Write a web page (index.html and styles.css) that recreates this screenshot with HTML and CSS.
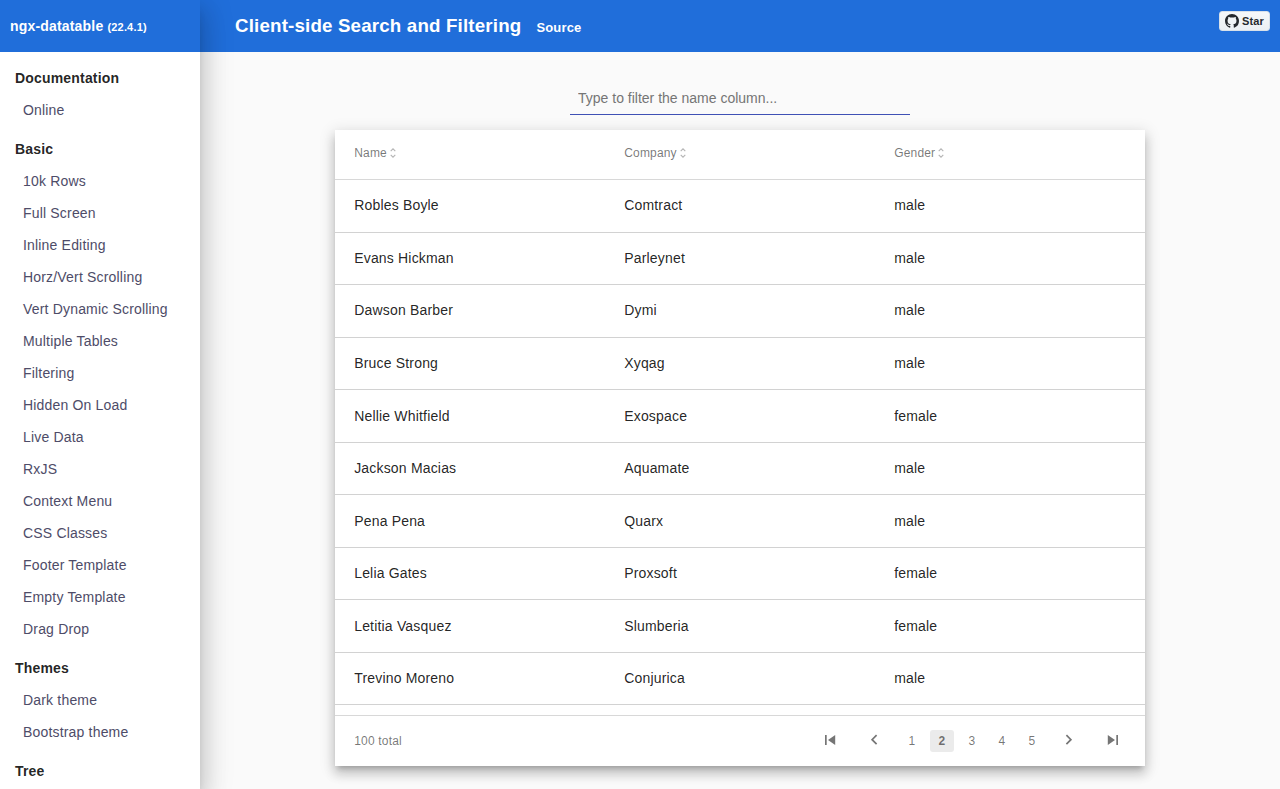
FILE: index.html
```html
<!DOCTYPE html>
<html lang="en">
<head>
<meta charset="utf-8">
<title>ngx-datatable</title>
<link rel="stylesheet" href="styles.css">
</head>
<body>
<div class="app">
  <nav class="sidebar">
    <h3 class="brand">ngx-datatable <small>(22.4.1)</small></h3>
    <div class="menu">
      <section><h4>Documentation</h4><ul><li><a>Online</a></li></ul></section>
      <section><h4>Basic</h4><ul>
        <li><a>10k Rows</a></li><li><a>Full Screen</a></li><li><a>Inline Editing</a></li><li><a>Horz/Vert Scrolling</a></li><li><a>Vert Dynamic Scrolling</a></li><li><a>Multiple Tables</a></li><li><a>Filtering</a></li><li><a>Hidden On Load</a></li><li><a>Live Data</a></li><li><a>RxJS</a></li><li><a>Context Menu</a></li><li><a>CSS Classes</a></li><li><a>Footer Template</a></li><li><a>Empty Template</a></li><li><a>Drag Drop</a></li>
      </ul></section>
      <section><h4>Themes</h4><ul><li><a>Dark theme</a></li><li><a>Bootstrap theme</a></li></ul></section>
      <section><h4>Tree</h4></section>
    </div>
  </nav>
  <main class="content">
    <header class="topbar">
      <h3>Client-side Search and Filtering</h3>
      <a class="source">Source</a>
      <a class="star"><svg viewBox="0 0 16 16" width="14" height="14"><path fill="currentColor" d="M8 0C3.58 0 0 3.58 0 8c0 3.54 2.29 6.53 5.47 7.59.4.07.55-.17.55-.38 0-.19-.01-.82-.01-1.49-2.01.37-2.53-.49-2.69-.94-.09-.23-.48-.94-.82-1.13-.28-.15-.68-.52-.01-.53.63-.01 1.08.58 1.23.82.72 1.21 1.87.87 2.33.66.07-.52.28-.87.51-1.07-1.78-.2-3.64-.89-3.64-3.95 0-.87.31-1.59.82-2.15-.08-.2-.36-1.02.08-2.12 0 0 .67-.21 2.2.82.64-.18 1.32-.27 2-.27s1.36.09 2 .27c1.53-1.04 2.2-.82 2.2-.82.44 1.1.16 1.92.08 2.12.51.56.82 1.27.82 2.15 0 3.07-1.87 3.75-3.65 3.95.29.25.54.73.54 1.48 0 1.07-.01 1.93-.01 2.2 0 .21.15.46.55.38A8.01 8.01 0 0 0 16 8c0-4.42-3.58-8-8-8Z"/></svg><span>Star</span></a>
    </header>
    <input class="filter" type="text" placeholder="Type to filter the name column...">
    <div class="table">
      <div class="row head">
        <div>Name<svg class="sort" viewBox="0 0 6 10"><path d="M.7 3.2 3 .9l2.3 2.3M.7 6.8 3 9.100l2.300-2.300"/></svg></div>
        <div>Company<svg class="sort" viewBox="0 0 6 10"><path d="M.7 3.2 3 .9l2.3 2.3M.7 6.8 3 9.100l2.300-2.300"/></svg></div>
        <div>Gender<svg class="sort" viewBox="0 0 6 10"><path d="M.7 3.2 3 .9l2.3 2.3M.7 6.8 3 9.100l2.300-2.300"/></svg></div>
      </div>
      <div class="rows">
        <div class="row"><div>Robles Boyle</div><div>Comtract</div><div>male</div></div>
        <div class="row"><div>Evans Hickman</div><div>Parleynet</div><div>male</div></div>
        <div class="row"><div>Dawson Barber</div><div>Dymi</div><div>male</div></div>
        <div class="row"><div>Bruce Strong</div><div>Xyqag</div><div>male</div></div>
        <div class="row"><div>Nellie Whitfield</div><div>Exospace</div><div>female</div></div>
        <div class="row"><div>Jackson Macias</div><div>Aquamate</div><div>male</div></div>
        <div class="row"><div>Pena Pena</div><div>Quarx</div><div>male</div></div>
        <div class="row"><div>Lelia Gates</div><div>Proxsoft</div><div>female</div></div>
        <div class="row"><div>Letitia Vasquez</div><div>Slumberia</div><div>female</div></div>
        <div class="row"><div>Trevino Moreno</div><div>Conjurica</div><div>male</div></div>
      </div>
      <div class="footer">
        <span>100 total</span>
        <div class="pager">
          <svg class="arrow" viewBox="0 0 20 20"><path fill="currentColor" d="M5 5h1.700v10H5zM15.200 5v10L8 10z"/></svg>
          <svg class="arrow" viewBox="0 0 20 20"><path class="chevron" d="m12.600 5.200-4.500 4.500 4.500 4.500"/></svg>
          <span class="pages"><a>1</a><a class="active">2</a><a>3</a><a>4</a><a>5</a></span>
          <svg class="arrow" viewBox="0 0 20 20"><path class="chevron" d="m7.400 5.200 4.500 4.500-4.500 4.500"/></svg>
          <svg class="arrow" viewBox="0 0 20 20"><path fill="currentColor" d="M13.300 5H15v10h-1.700zM4.800 5v10L12 10z"/></svg>
        </div>
      </div>
    </div>
  </main>
</div>
</body>
</html>
```
FILE: styles.css
```css
* { box-sizing: border-box; }
body {
  margin: 0;
  font: 14px/20px "Liberation Sans", Arial, sans-serif;
  letter-spacing: .18px;
  color: rgba(0, 0, 0, .87);
  background: #fafafa;
}
h3, h4, ul { margin: 0; padding: 0; list-style: none; }
.app { display: flex; height: 789px; overflow: hidden; }
.sidebar {
  width: 200px;
  flex: none;
  position: relative;
  z-index: 1;
  background: #fff;
  box-shadow: 0 8px 10px -5px rgba(0,0,0,.2), 0 16px 24px 2px rgba(0,0,0,.14), 0 6px 30px 5px rgba(0,0,0,.12);
}
.brand {
  height: 52px;
  padding: 0 10px;
  font-size: 14px;
  line-height: 52px;
  color: #fff;
  background: #206eda;
}
.brand small { font-size: 11px; }
.menu { padding-top: 10px; overflow: hidden; height: 737px; }
.menu section { margin-bottom: 7px; }
.menu h4 { padding: 0 15px; font-size: 14px; line-height: 32px; }
.menu li { padding-left: 23px; line-height: 32px; color: #4e4c68; }
.content { flex: 1; }
.topbar {
  display: flex;
  height: 52px;
  padding: 0 10px 0 35px;
  align-items: baseline;
  line-height: 52px;
  color: #fff;
  background: #206eda;
}
.topbar h3 { font-size: 18.72px; letter-spacing: .18px; }
.source { margin-left: 15px; font-size: 13px; font-weight: bold; }
.star {
  display: flex;
  align-self: flex-start;
  align-items: center;
  gap: 3px;
  width: 51px;
  height: 20px;
  margin: 11px 0 0 auto;
  padding: 0 5px;
  border: 1px solid #d8e1ea;
  border-radius: 3px;
  font: bold 11px/18px "Liberation Sans", Arial, sans-serif;
  letter-spacing: .1px;
  color: #25292e;
  background: linear-gradient(#f6f8fa, #ebf0f4);
}
.filter {
  display: block;
  width: 340px;
  height: 33px;
  margin: 30px auto 15px;
  padding: 8px;
  border: 0;
  border-bottom: 1px solid #3f51b5;
  outline: 0;
  background: transparent;
  font: 14px "Liberation Sans", Arial, sans-serif;
}
.table {
  width: 810px;
  height: 636px;
  margin: 0 auto;
  display: flex;
  flex-direction: column;
  background: #fff;
  box-shadow: 0 5px 5px -3px rgba(0,0,0,.2), 0 8px 10px 1px rgba(0,0,0,.14), 0 3px 14px 2px rgba(0,0,0,.12);
}
.row {
  display: grid;
  grid-template-columns: repeat(3, 270px);
  height: 52.54px;
  padding: .38px 0 0 19.2px;
  line-height: 51px;
  border-bottom: 1px solid #d2d2d2;
}
.head {
  height: 50px;
  padding-top: 0;
  line-height: 46px;
  font-size: 12px;
  color: rgba(0, 0, 0, .54);
  border-color: #d8d8d8;
}
.sort { width: 6px; height: 10px; margin-left: 3px; vertical-align: -1px; fill: none; stroke: #b4b4b4; stroke-width: 1.1; }
.rows { flex: 1; }
.footer {
  display: flex;
  justify-content: space-between;
  align-items: center;
  height: 51px;
  padding: 0 22px 0 19.2px;
  border-top: 1px solid #d8d8d8;
  font-size: 12px;
  color: rgba(0, 0, 0, .54);
}
.pager, .pages { display: flex; align-items: center; }
.arrow { width: 20px; height: 20px; margin-bottom: 2px; }
.arrow + .arrow { margin-left: 24px; }
.chevron { fill: none; stroke: currentColor; stroke-width: 1.7; }
.pages { gap: 6px; margin: 0 15px 0 16px; }
.pages a { width: 24px; height: 22px; border-radius: 3px; line-height: 22px; text-align: center; }
.pages .active { background: #ebebeb; font-weight: bold; }
```
